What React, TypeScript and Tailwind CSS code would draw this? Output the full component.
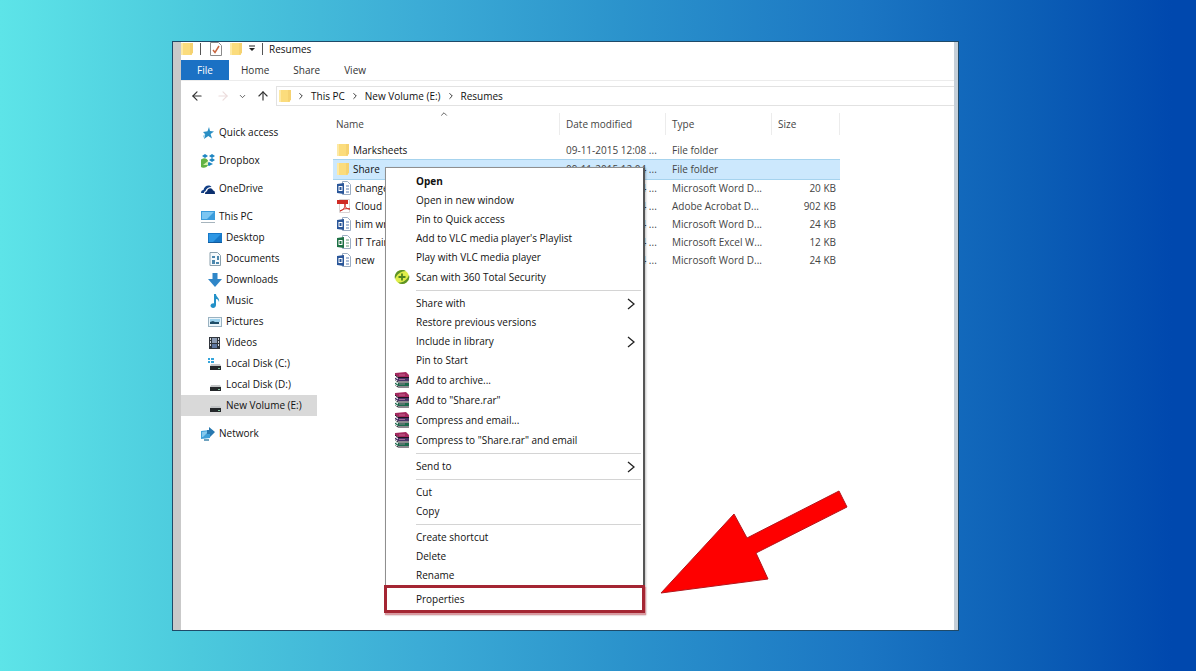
import type { ReactNode } from "react";
import { LuArrowLeft, LuArrowRight, LuArrowUp, LuChevronDown, LuChevronRight, LuChevronUp } from "react-icons/lu";

interface NavItem {
    label: string;
    icon: ReactNode;
    active?: boolean;
}

interface FileRow {
    name: string;
    icon: ReactNode;
    date: string;
    type: string;
    size?: string;
    selected?: boolean;
}

interface MenuEntry {
    label: string;
    icon?: ReactNode;
    bold?: boolean;
    submenu?: boolean;
}

const Folder = () => (
    <svg viewBox="0 0 12 14" className="h-[14px] w-3 shrink-0">
        <path d="M0 1h11v12H0z" fill="#fbdc7c" />
        <path d="M9 1h3v10l-3 2z" fill="#f5d271" />
        <path d="M0 1h2v12H0z" fill="#fde9a4" />
    </svg>
);

const CheckedPage = () => (
    <svg viewBox="0 0 12 14" className="h-[14px] w-3 shrink-0">
        <path d="M.5 .5h8l3 3v10H.5z" fill="#fff" stroke="#8b8b8b" />
        <path d="M3 8l2 2.500L9 4" fill="none" stroke="#c9663f" strokeWidth="1.500" />
    </svg>
);

const Star = () => (
    <svg viewBox="0 0 14 14" className="size-[14px]">
        <path d="M8 1l1 4 4 .4-3.400 2.600 1.400 4.500L7.300 10 3 13l1.200-4.700L2 6l4.500-.7z" fill="#2a8fc4" />
        <path d="M2 10l2-2-1 4z" fill="#8cc7e4" />
    </svg>
);

const Dropbox = () => (
    <svg viewBox="0 0 14 14" className="size-[14px]">
        <path d="M1 2l3-2 3 2-3 2zM8 2l3-2 3 2-3 2zM8 6l3-2 3 2-3 2zM5 10l3-2 4 2-4 2z" fill="#1f86c2" />
        <path d="M1 5a4.500 4.500 0 106 3C8 6 4 3 1 5z" fill="#63b345" />
        <path d="M2 11l5-4v4z" fill="#d8f0a8" />
    </svg>
);

const OneDrive = () => (
    <svg viewBox="0 0 14 14" className="size-[14px]">
        <path d="M0 11c0-2 1-3 2.500-3C3 4 8 2 10.500 5 7 5 5 7 4.500 9 3.500 9.200 3 10 3 11z" fill="#123f86" />
        <path d="M4 12c0-2 1-2.500 2-2.500C6.500 6 11 5 12 8.500c1.500 0 2 1 2 3.500z" fill="#0b2f6e" />
    </svg>
);

const Computer = () => (
    <svg viewBox="0 0 14 14" className="size-[14px]">
        <rect x="0" y="1" width="14" height="9" fill="#3b9cdc" />
        <path d="M1 2h12L6 9H1z" fill="#7cc6f2" />
        <path d="M0 12h14v1H0z" fill="#a6b4bd" />
    </svg>
);

const Desktop = () => (
    <svg viewBox="0 0 14 14" className="size-[14px]">
        <rect x="0" y="2" width="14" height="10" fill="#1778c8" />
        <path d="M1 3h12l-8 8H1z" fill="#2e97e4" />
        <path d="M0 11h14v1H0z" fill="#125a9c" />
    </svg>
);

const Document = () => (
    <svg viewBox="0 0 14 14" className="size-[14px]">
        <path d="M2 .5h7.500l3 3v10H2z" fill="#f6fafc" stroke="#8aa0ad" />
        <path d="M4 4h3v2H4zM9 4h2v4H9zM4 8h3v4H4zM8 10h3v2H8z" fill="#4c87ad" />
    </svg>
);

const Download = () => (
    <svg viewBox="0 0 14 14" className="size-[14px]">
        <path d="M4.500 0h5v6H14l-7 8-7-8h4.500z" fill="#2f86c8" />
    </svg>
);

const Music = () => (
    <svg viewBox="0 0 14 14" className="size-[14px]">
        <path d="M6 0h2c0 3 4 4 3 8-.5-2-1.500-3-3-3v6c0 4-6 3.500-5.500.5C3 9.500 5 9 6 9.500z" fill="#2391c8" />
    </svg>
);

const Picture = () => (
    <svg viewBox="0 0 14 14" className="size-[14px]">
        <rect x=".5" y="2.500" width="13" height="9" fill="#e9f4fa" stroke="#9ab2c1" />
        <path d="M2 4h10v3H2z" fill="#9cd2ee" />
        <path d="M2 7l3-1 2 1h4v2H2z" fill="#1d4d68" />
    </svg>
);

const Video = () => (
    <svg viewBox="0 0 14 14" className="size-[14px]">
        <path d="M1 1h11v12H1z" fill="#31363d" />
        <path d="M4 2h5v5H4z" fill="#8c9cb4" />
        <path d="M4 8h5v4H4z" fill="#5e77a0" />
        <path d="M2 2h1v2H2zM2 5h1v2H2zM2 8h1v2H2zM10 2h1v2h-1zM10 5h1v2h-1zM10 8h1v2h-1z" fill="#d5d9de" />
    </svg>
);

const Disk = ({ system }: { system?: boolean }) => (
    <svg viewBox="0 0 14 14" className="size-[14px]">
        {system && <path d="M0 1h2v2H0zM3 1h3v2H3zM0 4h2v2H0zM3 4h3v2H3z" fill="#34a5dc" />}
        <path d="M3 7h9l1 2H2z" fill="#c3c5c7" />
        <path d="M2 9h11v4H2z" fill="#25282b" />
        <path d="M10 11h2v1h-2z" fill="#7fc29b" />
    </svg>
);

const Network = () => (
    <svg viewBox="0 0 14 14" className="size-[14px]">
        <path d="M0 4l9-1v8l-9 1z" fill="#3f9fd8" />
        <path d="M1 5l7-1-6 6H1z" fill="#86c9ee" />
        <path d="M8 0l6 5-5 5V7H6V3h2z" fill="#2878b0" />
        <path d="M3 12h5v2H3z" fill="#6fa3c0" />
    </svg>
);

// Word and Excel only differ in colour
const Office = ({ excel }: { excel?: boolean }) => (
    <svg viewBox="0 0 14 14" className="size-[14px] shrink-0">
        <path d="M5.500 .5h5l3 3v10h-8z" fill="#fff" stroke="#9badc2" />
        <path d="M9 5h3M9 8h3M9 11h3" stroke={excel ? "#5f9a77" : "#5b7db0"} />
        <path d="M0 3l7-1v11l-7-1z" fill={excel ? "#1e7145" : "#2a5699"} />
        <rect x="2" y="5.500" width="3" height="4" fill="none" stroke="#fff" />
    </svg>
);

const Pdf = () => (
    <svg viewBox="0 0 14 14" className="size-[14px] shrink-0">
        <path d="M2.500 .5h10v13h-10z" fill="#fff" stroke="#d9d2d2" />
        <path d="M0 1h11v4H0z" fill="#cf2a24" />
        <path d="M3 12c4-1 5-4 5-7 0 4 2 5 5 5-4-1-7 0-10 2z" fill="none" stroke="#cf2a24" />
    </svg>
);

const Shield = () => (
    <svg viewBox="0 0 16 16" className="size-4">
        <circle cx="8" cy="8" r="7" fill="#dfee4a" />
        <path d="M1 10A7 7 0 018 1c2 0 3 .5 4 1C7 2 3 5 1 10zM15 6a7 7 0 01-11 7.500C9 14 13 11 15 6z" fill="#5d9226" />
        <path d="M8 4.500v7M4.500 8h7" stroke="#4f8420" strokeWidth="1.800" />
    </svg>
);

// three stacked books
const Rar = () => (
    <svg viewBox="0 0 16 16" className="size-4">
        <path d="M1 1l11-1 3 3v2H4L1 3z" fill="#a4285e" />
        <path d="M1 5l3 1h11v3H4L1 8z" fill="#4a3468" />
        <path d="M1 10l3 1h11v3H4l-3-2z" fill="#1c6b4d" />
        <path d="M1 3l3 2.500h11M1 8l3 2h11M1 13l3 2h11" fill="none" stroke="#1b1420" />
        <path d="M1 5l3 2M1 10l3 2M0 7l3 2M0 12l3 2" stroke="#fff" />
        <path d="M5 3h6M5 7.500h6M5 12h6" stroke="#d58fae" strokeWidth=".6" />
    </svg>
);

const topPlaces: NavItem[] = [
    { label: "Quick access", icon: <Star /> },
    { label: "Dropbox", icon: <Dropbox /> },
    { label: "OneDrive", icon: <OneDrive /> },
];

const pcPlaces: NavItem[] = [
    { label: "Desktop", icon: <Desktop /> },
    { label: "Documents", icon: <Document /> },
    { label: "Downloads", icon: <Download /> },
    { label: "Music", icon: <Music /> },
    { label: "Pictures", icon: <Picture /> },
    { label: "Videos", icon: <Video /> },
    { label: "Local Disk (C:)", icon: <Disk system /> },
    { label: "Local Disk (D:)", icon: <Disk /> },
    { label: "New Volume (E:)", icon: <Disk />, active: true },
];

const files: FileRow[] = [
    { name: "Marksheets", icon: <Folder />, date: "09-11-2015 12:08 ...", type: "File folder" },
    { name: "Share", icon: <Folder />, date: "09-11-2015 12:04 ...", type: "File folder", selected: true },
    { name: "change", icon: <Office />, date: "09-11-2015 12:04 ...", type: "Microsoft Word D...", size: "20 KB" },
    { name: "Cloud", icon: <Pdf />, date: "09-11-2015 12:04 ...", type: "Adobe Acrobat D...", size: "902 KB" },
    { name: "him wr", icon: <Office />, date: "09-11-2015 12:04 ...", type: "Microsoft Word D...", size: "24 KB" },
    { name: "IT Train", icon: <Office excel />, date: "09-11-2015 12:04 ...", type: "Microsoft Excel W...", size: "12 KB" },
    { name: "new", icon: <Office />, date: "09-11-2015 12:04 ...", type: "Microsoft Word D...", size: "24 KB" },
];

const menuGroups: MenuEntry[][] = [
    [
        { label: "Open", bold: true },
        { label: "Open in new window" },
        { label: "Pin to Quick access" },
        { label: "Add to VLC media player's Playlist" },
        { label: "Play with VLC media player" },
        { label: "Scan with 360 Total Security", icon: <Shield /> },
    ],
    [
        { label: "Share with", submenu: true },
        { label: "Restore previous versions" },
        { label: "Include in library", submenu: true },
        { label: "Pin to Start" },
        { label: "Add to archive...", icon: <Rar /> },
        { label: 'Add to "Share.rar"', icon: <Rar /> },
        { label: "Compress and email...", icon: <Rar /> },
        { label: 'Compress to "Share.rar" and email', icon: <Rar /> },
    ],
    [{ label: "Send to", submenu: true }],
    [{ label: "Cut" }, { label: "Copy" }],
    [{ label: "Create shortcut" }, { label: "Delete" }, { label: "Rename" }],
];

const NavButton = ({ item, nested }: { item: NavItem; nested?: boolean }) => (
    <button
        className={`flex h-[21px] w-full items-center gap-1 text-left ${nested ? "pl-[27px]" : "pl-5"} ${item.active ? "bg-[#d9d9d9]" : ""}`}
    >
        {item.icon}
        {item.label}
    </button>
);

const Sidebar = () => (
    <nav className="w-[152px] shrink-0 pt-4 pr-4">
        <ul className="flex flex-col gap-[7px]">
            {topPlaces.map((item) => (
                <li key={item.label}>
                    <NavButton item={item} />
                </li>
            ))}
            <li>
                <NavButton item={{ label: "This PC", icon: <Computer /> }} />
                <ul>
                    {pcPlaces.map((item) => (
                        <li key={item.label}>
                            <NavButton item={item} nested />
                        </li>
                    ))}
                </ul>
            </li>
            <li>
                <NavButton item={{ label: "Network", icon: <Network /> }} />
            </li>
        </ul>
    </nav>
);

const FileTable = () => (
    <table className="w-[507px] table-fixed self-start text-[#444]">
        <colgroup>
            <col />
            <col className="w-[106px]" />
            <col className="w-[106px]" />
            <col className="w-[68px]" />
        </colgroup>
        <thead>
            <tr className="h-[35px] text-left">
                <th className="p-0 font-normal">
                    <div className="relative h-[22px] border-r border-[#ececec] pl-[3px] leading-[22px]">
                        Name
                        <LuChevronUp size={10} className="absolute -top-1 right-[110px]" />
                    </div>
                </th>
                {["Date modified", "Type", "Size"].map((title) => (
                    <th key={title} className="p-0 font-normal">
                        <div className="h-[22px] border-r border-[#ececec] pl-[6px] leading-[22px]">{title}</div>
                    </th>
                ))}
            </tr>
        </thead>
        <tbody>
            {files.map((file) => (
                <tr key={file.name} className={`leading-4 ${file.selected ? "h-5 border-y border-[#a6d3ee] bg-[#cce8fd]" : "h-[18px]"}`}>
                    <td className="p-0">
                        <div className="flex items-center gap-1 pl-1 text-[#111]">
                            {file.icon}
                            {file.name}
                        </div>
                    </td>
                    <td className="p-0 pl-[6px] whitespace-nowrap">{file.date}</td>
                    <td className="p-0 pl-[6px] whitespace-nowrap">{file.type}</td>
                    <td className="p-0 pr-1 text-right">{file.size}</td>
                </tr>
            ))}
        </tbody>
    </table>
);

const ContextMenu = () => (
    <div
        role="menu"
        className="absolute top-[125px] left-[212px] w-[260px] border border-r-2 border-[#8f8f8f] border-r-[#555] bg-white pt-1 shadow-[1px_1px_2px_rgba(0,0,0,0.25)]"
    >
        {menuGroups.map((group, i) => (
            <div key={i}>
                {i > 0 && <hr className="my-[3px] mr-[2px] ml-[30px] border-[#d4d4d4]" />}
                {group.map((entry) => (
                    <button key={entry.label} role="menuitem" className={`flex w-full items-center px-2 text-left ${entry.icon ? "h-5" : "h-[19px]"}`}>
                        <span className="w-[22px]">{entry.icon}</span>
                        <span className={`flex-1 ${entry.bold ? "font-bold" : ""}`}>{entry.label}</span>
                        {entry.submenu && (
                            <svg viewBox="0 0 8 12" className="h-3 w-2" fill="none" stroke="#222" strokeWidth="1.300">
                                <path d="M1 1l6 5-6 5" />
                            </svg>
                        )}
                    </button>
                ))}
            </div>
        ))}
        <div className="-mr-[2px] -ml-[2px]">
            <button role="menuitem" className="h-7 w-full border-[3px] border-[#a42633] pl-[29px] text-left shadow-[1px_2px_1px_#d99aa0]">
                Properties
            </button>
        </div>
    </div>
);

const App = () => {
    return (
        <div className="flex min-h-screen flex-col bg-linear-[90deg,#5de4e8,#4ccadd_16%,#3cacd6_35%,#2b93cc_52%,#1b76c3_72%,#0c5fb6_86%,#0048ae_98%] pt-[41px] pr-[237px] pb-10 pl-43 font-['Open_Sans',sans-serif] text-[10px] text-[#111]">
            <div className="relative flex flex-1 flex-col border border-[#1f4a68] bg-white">
                <div className="flex flex-1 flex-col border-r-4 border-l-8 border-r-[#c5cfd8] border-l-[#c9c9c9]">
                    <header>
                        <div className="flex h-[18px] items-center pb-1">
                            <Folder />
                            <span className="mx-[7px] h-3 w-px bg-[#555]" />
                            <span className="ml-[2px]">
                                <CheckedPage />
                            </span>
                            <span className="ml-2">
                                <Folder />
                            </span>
                            <svg viewBox="0 0 8 8" className="mx-[6px] size-2">
                                <path d="M1 1h6" stroke="#222" />
                                <path d="M1 3h6L4 6z" fill="#222" />
                            </svg>
                            <span className="h-3 w-px bg-[#555]" />
                            <h1 className="pl-[6px]">Resumes</h1>
                        </div>
                        <div className="flex h-[21px] items-center border-b border-[#ececec] text-[#333]">
                            <button className="h-full w-12 bg-[#1b71c4] text-white">File</button>
                            <button className="px-3">Home</button>
                            <button className="px-3">Share</button>
                            <button className="px-3">View</button>
                        </div>
                        <div className="flex h-[25px] items-end">
                            <div className="flex h-5 w-[95px] items-center text-[#333]">
                                <button aria-label="Back" className="ml-[9px]">
                                    <LuArrowLeft size={14} />
                                </button>
                                <button aria-label="Forward" className="ml-3 text-[#ecdcdc]">
                                    <LuArrowRight size={14} />
                                </button>
                                <button aria-label="Recent" className="ml-2">
                                    <LuChevronDown size={9} />
                                </button>
                                <button aria-label="Up" className="ml-[9px]">
                                    <LuArrowUp size={14} />
                                </button>
                            </div>
                            <div className="flex h-5 flex-1 items-center border border-r-0 border-[#e2e2e2] pl-[2px]">
                                <Folder />
                                {["This PC", "New Volume (E:)", "Resumes"].map((crumb) => (
                                    <span key={crumb} className="flex items-center">
                                        <LuChevronRight size={10} className="mx-[5px]" />
                                        <a href="#">{crumb}</a>
                                    </span>
                                ))}
                            </div>
                        </div>
                    </header>
                    <main className="flex flex-1">
                        <Sidebar />
                        <FileTable />
                    </main>
                </div>
                <ContextMenu />
                <svg viewBox="0 0 190 106" className="absolute top-[447px] left-[486px] w-[190px]">
                    <path d="M2 104L75 25l13 24 92-47 8 16-91 46 12 26z" fill="#fe0000" stroke="#b3161c" />
                </svg>
            </div>
        </div>
    );
};

export default App;
